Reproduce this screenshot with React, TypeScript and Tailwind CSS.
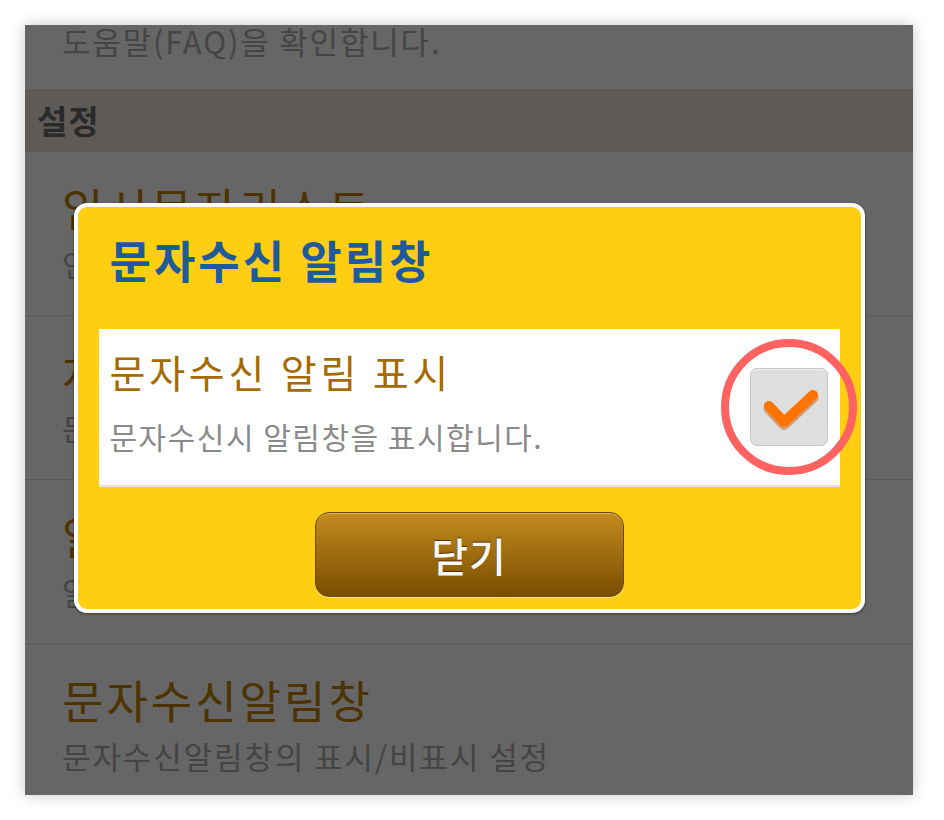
import React from "react";

const rows = [
  { title: "임시문자리스트", sub: "인증된 문자 목록을 확인합니다." },
  { title: "차단문자리스트", sub: "문자 차단 목록을 관리합니다." },
  { title: "알림음 설정", sub: "알림음을 설정합니다." },
  { title: "문자수신알림창", sub: "문자수신알림창의 표시/비표시 설정" },
];

export default function App() {
  return (
    <div className="w-[944px] h-[820px] bg-white pt-[25px] pl-[25px] font-['Noto_Sans_CJK_KR',sans-serif]">
      <div className="relative w-[888px] h-[770px] overflow-hidden bg-[#666666] shadow-[0_0_14px_rgba(0,0,0,0.22)]">
        {/* background list (already dimmed) */}
        <div className="flex flex-col">
          <div className="h-[64px] pl-[37px]">
            <div className="text-[31px] leading-[31px] tracking-[1.8px] text-[#454545]">도움말(FAQ)을 확인합니다.</div>
          </div>
          <div className="h-[63px] bg-[#5e5a57] flex items-center pl-[12px]">
            <span className="text-[33px] leading-[33px] tracking-[1px] font-bold text-[#2a2a2a]">설정</span>
          </div>
          {rows.map((r, i) => (
            <div key={i} className="h-[164px] shrink-0 border-b border-[#5a5a5a] pl-[37px] pt-[33px] flex flex-col">
              <div className="text-[45px] leading-[45px] tracking-[3px] text-[#4d3300]">{r.title}</div>
              <div className="mt-[18px] text-[31px] leading-[31px] tracking-[1.9px] text-[#444444]">{r.sub}</div>
            </div>
          ))}
        </div>

        {/* dialog */}
        <div className="absolute inset-0 flex items-center justify-center">
          <div className="w-[791px] mt-[-4px] rounded-[13px] border-[4px] border-white bg-[#ffce13] shadow-[0_1px_3px_rgba(0,0,0,0.45)] flex flex-col">
            <div className="pt-[30px] pl-[32px] text-[45px] leading-[45px] tracking-[3px] font-bold text-[#1f5b9b]">문자수신 알림창</div>
            <div className="mt-[47px] mx-[21px] h-[158px] bg-white border-b-[2px] border-[#dfe1ec] flex items-start">
              <div className="flex-1 pl-[11px] pt-[23px] flex flex-col">
                <div className="text-[39px] leading-[39px] tracking-[3.8px] text-[#a56b02]">문자수신 알림 표시</div>
                <div className="mt-[30px] text-[30px] leading-[30px] tracking-[1.5px] text-[#8a8a8a]">문자수신시 알림창을 표시합니다.</div>
              </div>
              <div className="self-center mr-[12px] relative w-[78px] h-[78px]">
                <div className="w-full h-full rounded-[7px] bg-[#dedede] border border-[#c6c6c6] shadow-[inset_0_1px_1px_rgba(255,255,255,0.6)]">
                  <svg width="78" height="78" viewBox="0 0 78 78" className="block">
                    <path d="M18 38 L33 54 L62 27" fill="none" stroke="#b85200" strokeOpacity="0.45" strokeWidth="11" strokeLinecap="round" strokeLinejoin="round" transform="translate(0 1.5)" />
                    <path d="M18 37 L33 53 L62 26" fill="none" stroke="#ff7400" strokeWidth="10" strokeLinecap="round" strokeLinejoin="round" />
                  </svg>
                </div>
                <div className="absolute left-[-29px] top-[-29px] w-[136px] h-[136px] rounded-full border-[8px] border-[#ff6361]" />
              </div>
            </div>
            <div className="mt-[25px] mb-[12px] flex justify-center">
              <div className="w-[309px] h-[85px] rounded-[14px] border border-[#6a4a0e] bg-gradient-to-b from-[#c38c1e] to-[#7a4e02] shadow-[inset_0_1px_0_rgba(255,230,160,0.45),0_1px_0_rgba(255,240,190,0.7)] flex items-center justify-center">
                <span className="text-[40px] leading-[40px] tracking-[1px] font-medium text-[#f8f8f8] [text-shadow:0_-1px_1px_rgba(60,35,0,0.8)]">닫기</span>
              </div>
            </div>
          </div>
        </div>
      </div>
    </div>
  );
}
